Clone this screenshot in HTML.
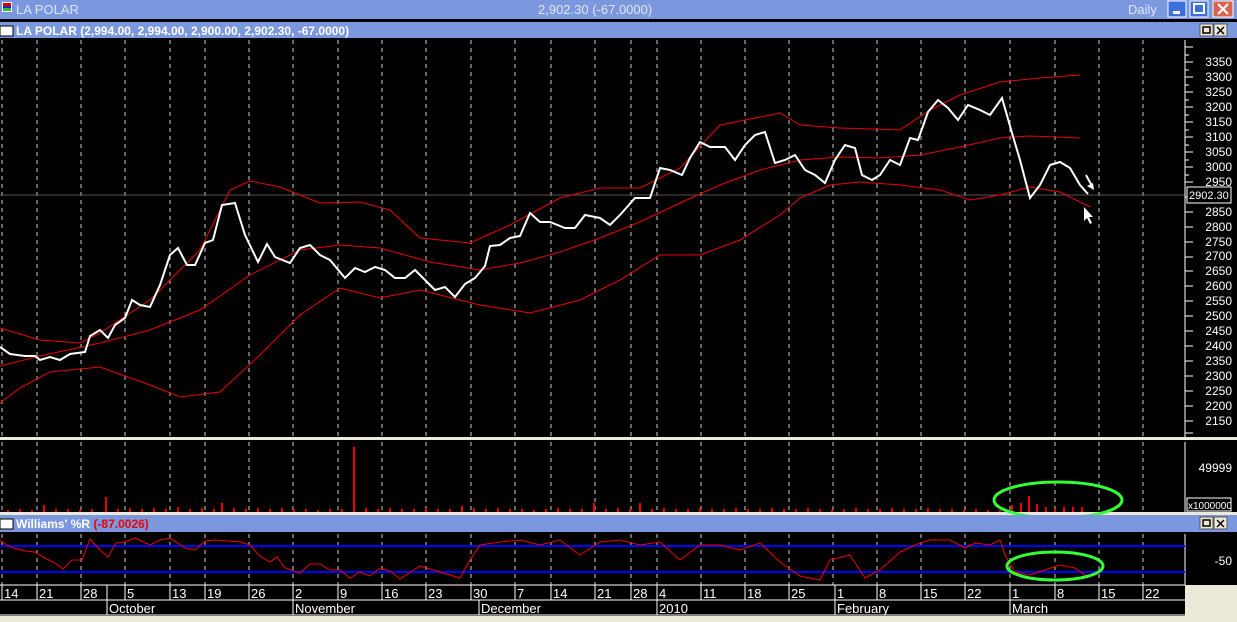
<!DOCTYPE html>
<html><head><meta charset="utf-8"><style>
body{margin:0;width:1237px;height:622px;overflow:hidden;background:#ece9d8;font-family:"Liberation Sans",sans-serif}
svg{display:block}
text{font-family:"Liberation Sans",sans-serif}
</style></head><body>
<svg width="1237" height="622" xmlns="http://www.w3.org/2000/svg">
<rect width="1237" height="622" fill="#000"/>
<rect x="0" y="0" width="1237" height="19" fill="#7b97dd"/>
<rect x="2" y="2" width="10" height="10" fill="#fff"/><rect x="3" y="3" width="8" height="3" fill="#d00"/><rect x="3" y="6" width="8" height="2" fill="#22c"/><rect x="3" y="8" width="8" height="3" fill="#3b3"/>
<text x="16" y="14" fill="#dfe6f7" font-size="13">LA POLAR</text>
<text x="538" y="14" fill="#dfe6f7" font-size="13">2,902.30 (-67.0000)</text>
<text x="1128" y="14" fill="#dfe6f7" font-size="13">Daily</text>
<rect x="1168" y="1" width="18" height="16" fill="#3e6fdc" stroke="#fff" stroke-width="1"/><rect x="1173" y="11" width="7" height="3" fill="#fff"/>
<rect x="1190" y="1" width="18" height="16" fill="#3e6fdc" stroke="#fff"/><rect x="1194" y="4" width="10" height="9" fill="none" stroke="#fff" stroke-width="2"/>
<rect x="1213" y="1" width="20" height="16" fill="#d9634c" stroke="#fff"/><path d="M1218 4l10 10M1228 4l-10 10" stroke="#fff" stroke-width="2"/>
<rect x="0" y="22" width="1237" height="16" fill="#7b97dd"/>
<rect x="0" y="26" width="13" height="10" fill="#fff" stroke="#000"/>
<text x="16" y="35" fill="#fff" font-size="12" font-weight="bold">LA POLAR <tspan>(2,994.00, 2,994.00, 2,900.00, 2,902.30, -67.0000)</tspan></text>
<rect x="1200" y="24" width="13" height="12" fill="#ece9d8" stroke="#555"/><rect x="1203" y="27" width="7" height="6" fill="none" stroke="#000" stroke-width="1.5"/>
<rect x="1214" y="24" width="13" height="12" fill="#ece9d8" stroke="#555"/><path d="M1217 27l7 7M1224 27l-7 7" stroke="#000" stroke-width="1.5"/>
<g stroke="#ccc" stroke-width="1" stroke-dasharray="4,4">
<path d="M2 40V437M37 40V437M81 40V437M125 40V437M170 40V437M205 40V437M249 40V437M293 40V437M338 40V437M382 40V437M426 40V437M471 40V437M515 40V437M551 40V437M595 40V437M631 40V437M657 40V437M701 40V437M745 40V437M789 40V437M833 40V437M877 40V437M921 40V437M965 40V437M1010 40V437M1055 40V437M1099 40V437M1143 40V437"/>
<path d="M2 442V512M37 442V512M81 442V512M125 442V512M170 442V512M205 442V512M249 442V512M293 442V512M338 442V512M382 442V512M426 442V512M471 442V512M515 442V512M551 442V512M595 442V512M631 442V512M657 442V512M701 442V512M745 442V512M789 442V512M833 442V512M877 442V512M921 442V512M965 442V512M1010 442V512M1055 442V512M1099 442V512M1143 442V512"/>
<path d="M2 534V585M37 534V585M81 534V585M125 534V585M170 534V585M205 534V585M249 534V585M293 534V585M338 534V585M382 534V585M426 534V585M471 534V585M515 534V585M551 534V585M595 534V585M631 534V585M657 534V585M701 534V585M745 534V585M789 534V585M833 534V585M877 534V585M921 534V585M965 534V585M1010 534V585M1055 534V585M1099 534V585M1143 534V585"/>
</g>
<line x1="0" y1="195" x2="1185" y2="195" stroke="#555"/>
<g fill="none" stroke="#e00" stroke-width="1">
<polyline points="0,366 40,356 100,343 150,330 200,310 250,275 300,250 340,245 380,248 430,262 480,270 520,263 560,252 600,238 640,222 680,203 720,185 760,170 800,160 840,157 880,158 920,155 960,147 1000,138 1030,136 1080,138"/>
<polyline points="0,328 40,340 80,343 100,333 150,300 200,250 230,190 250,181 280,187 320,203 360,202 390,210 420,238 470,243 510,225 560,198 600,188 640,188 680,168 720,125 760,117 780,113 800,125 840,128 900,130 930,110 960,95 1000,82 1040,78 1080,75"/>
<polyline points="0,403 20,388 50,372 100,367 150,385 180,397 220,392 260,355 300,315 340,288 380,298 420,290 480,305 530,313 580,300 620,280 660,255 700,255 740,240 780,215 800,198 830,185 860,182 900,185 940,190 970,200 1000,195 1030,187 1060,192 1090,207"/>
</g>
<polyline fill="none" stroke="#fff" stroke-width="2" points="0,347 10,354 25,356 35,356 40,360 50,357 60,360 70,354 85,352 90,336 100,330 108,338 115,325 125,318 132,300 140,305 150,307 160,285 170,255 178,248 187,265 195,265 205,243 213,240 222,205 235,203 245,235 258,262 267,244 275,257 290,263 300,248 310,245 320,255 330,260 345,278 355,268 365,272 375,267 385,270 395,278 405,278 415,270 425,280 435,290 445,287 455,297 465,284 475,278 485,266 490,246 500,245 510,238 520,236 530,213 540,222 550,222 565,228 575,228 585,215 600,218 610,225 620,215 635,198 650,198 660,168 670,170 682,175 690,158 700,142 710,147 725,147 735,160 745,145 755,135 765,132 775,163 785,160 795,155 805,170 815,175 825,183 835,160 845,145 855,148 862,175 872,180 880,175 890,160 900,165 910,138 918,140 928,112 938,100 948,108 958,120 968,105 980,110 990,115 1002,98 1012,133 1020,160 1030,198 1040,185 1050,165 1060,162 1070,168 1080,185 1088,194"/>
<line x1="1086" y1="175" x2="1092" y2="186" stroke="#fff" stroke-width="2"/><path d="M1094 190l-7-4 6-3z" fill="#fff"/>
<path d="M1084 207v14l3-3 3 6 2-1-3-6h4z" fill="#fff"/>
<g stroke="#fff"><line x1="1185" y1="40" x2="1185" y2="437"/><line x1="1185" y1="442" x2="1185" y2="512"/><line x1="1185" y1="534" x2="1185" y2="585"/></g>
<g stroke="#fff"><path d="M1185 47h8M1185 55h4M1185 62h8M1185 70h4M1185 77h8M1185 85h4M1185 92h8M1185 100h4M1185 107h8M1185 115h4M1185 122h8M1185 130h4M1185 137h8M1185 145h4M1185 152h8M1185 160h4M1185 167h8M1185 175h4M1185 182h8M1185 197h8M1185 212h8M1185 227h8M1185 242h8M1185 257h8M1185 271h8M1185 286h8M1185 301h8M1185 316h8M1185 331h8M1185 346h8M1185 361h8M1185 376h8M1185 391h8M1185 406h8M1185 421h8M1185 433h8"/></g>
<g fill="#fff" font-size="12" text-anchor="end">
<text x="1232" y="66">3350</text><text x="1232" y="81">3300</text><text x="1232" y="96">3250</text><text x="1232" y="111">3200</text><text x="1232" y="126">3150</text><text x="1232" y="141">3100</text><text x="1232" y="156">3050</text><text x="1232" y="171">3000</text><text x="1232" y="186">2950</text><text x="1232" y="216">2850</text><text x="1232" y="231">2800</text><text x="1232" y="246">2750</text><text x="1232" y="260">2700</text><text x="1232" y="275">2650</text><text x="1232" y="290">2600</text><text x="1232" y="305">2550</text><text x="1232" y="320">2500</text><text x="1232" y="335">2450</text><text x="1232" y="350">2400</text><text x="1232" y="365">2350</text><text x="1232" y="380">2300</text><text x="1232" y="395">2250</text><text x="1232" y="410">2200</text><text x="1232" y="425">2150</text>
<text x="1232" y="472">49999</text><text x="1232" y="565">-50</text>
</g>
<rect x="1187" y="187" width="44" height="16" fill="#000" stroke="#fff"/><text x="1189" y="199" fill="#fff" font-size="11">2902.30</text>
<rect x="1187" y="498" width="44" height="13" fill="#000" stroke="#fff"/><text x="1188" y="509" fill="#fff" font-size="10">x1000000</text>
<rect x="0" y="437" width="1237" height="3" fill="#ece9d8"/>
<rect x="0" y="512" width="1237" height="3" fill="#ece9d8"/>
<g stroke="#e00" stroke-width="2">
<path d="M8 510v2M20 509v3M32 510v2M44 505v7M56 509v3M68 509v3M80 510v2M92 509v3M106 497v15M118 509v3M130 508v4M142 509v3M154 508v4M166 509v3M178 507v5M190 509v3M202 508v4M214 509v3M222 503v9M234 508v4M246 509v3M258 508v4M270 509v3M282 508v4M294 509v3M306 509v3M318 510v2M330 509v3M342 509v3M354 447v65M366 508v4M378 509v3M390 508v4M402 509v3M414 509v3M426 508v4M438 509v3M450 509v3M462 506v6M474 508v4M486 509v3M498 508v4M510 509v3M522 509v3M534 510v2M546 509v3M558 508v4M570 509v3M582 509v3M594 503v9M606 509v3M618 508v4M630 509v3M640 503v9M652 509v3M664 508v4M676 509v3M688 509v3M700 508v4M712 509v3M724 509v3M736 508v4M748 509v3M760 509v3M772 508v4M784 509v3M796 509v3M808 508v4M820 509v3M832 510v2M844 509v3M856 508v4M868 509v3M880 509v3M892 508v4M904 509v3M916 509v3M928 508v4M940 509v3M952 509v3M964 510v2M976 509v3M988 510v2M1000 510v2M1012 505v7M1021 503v9M1029 496v16M1037 504v8M1046 507v5M1055 509v3M1064 507v5M1073 507v5M1082 507v5"/>
</g>
<ellipse cx="1058" cy="500" rx="64" ry="18" fill="none" stroke="#3f3" stroke-width="3"/>
<rect x="0" y="515" width="1237" height="17" fill="#7b97dd"/>
<rect x="0" y="519" width="13" height="10" fill="#fff" stroke="#000"/>
<text x="16" y="528" fill="#fff" font-size="12" font-weight="bold">Williams' %R <tspan fill="#e00">(-87.0026)</tspan></text>
<rect x="1200" y="517" width="13" height="12" fill="#ece9d8" stroke="#555"/><rect x="1203" y="520" width="7" height="6" fill="none" stroke="#000" stroke-width="1.5"/>
<rect x="1214" y="517" width="13" height="12" fill="#ece9d8" stroke="#555"/><path d="M1217 520l7 7M1224 520l-7 7" stroke="#000" stroke-width="1.5"/>
<g stroke="#00f" stroke-width="2"><line x1="0" y1="546" x2="1185" y2="546"/><line x1="0" y1="572" x2="1185" y2="572"/></g>
<polyline fill="none" stroke="#e00" stroke-width="1" points="0,540 10,547 25,551 35,552 45,558 55,563 63,569 72,560 82,560 90,539 100,550 108,557 116,543 125,542 135,538 150,545 160,540 170,538 185,548 195,550 205,541 215,540 240,542 250,545 260,556 270,562 277,557 285,568 300,573 310,564 320,564 330,570 340,570 350,578 360,572 370,576 380,568 390,571 400,579 420,566 440,572 460,578 470,560 480,545 500,542 520,540 540,545 560,540 580,555 600,542 620,540 640,545 660,542 680,560 700,545 720,545 740,550 760,543 780,562 800,576 820,580 830,560 850,555 865,578 880,570 900,552 915,545 930,540 950,540 965,548 975,543 990,545 1000,540 1005,555 1015,572 1030,575 1045,570 1060,565 1075,568 1085,575"/>
<ellipse cx="1055" cy="566" rx="48" ry="14" fill="none" stroke="#3f3" stroke-width="3"/>
<line x1="0" y1="585" x2="1185" y2="585" stroke="#fff"/>
<line x1="0" y1="600" x2="1185" y2="600" stroke="#fff"/>
<line x1="0" y1="615" x2="1237" y2="615" stroke="#fff"/>
<rect x="1185" y="585" width="52" height="37" fill="#ece9d8"/>
<rect x="0" y="616" width="1237" height="6" fill="#ece9d8"/>
<g stroke="#fff"><path d="M2 585v15M37 585v15M81 585v15M107 585v30M125 585v15M170 585v15M205 585v15M249 585v15M293 585v30M338 585v15M382 585v15M426 585v15M471 585v15M479 600v15M515 585v15M551 585v15M595 585v15M631 585v15M657 585v30M701 585v15M745 585v15M789 585v15M835 585v30M877 585v15M921 585v15M965 585v15M1010 585v30M1055 585v15M1099 585v15M1143 585v15"/></g>
<g fill="#fff" font-size="13">
<text x="4" y="598">14</text><text x="39" y="598">21</text><text x="83" y="598">28</text><text x="127" y="598">5</text><text x="172" y="598">13</text><text x="207" y="598">19</text><text x="251" y="598">26</text><text x="295" y="598">2</text><text x="340" y="598">9</text><text x="384" y="598">16</text><text x="428" y="598">23</text><text x="473" y="598">30</text><text x="517" y="598">7</text><text x="553" y="598">14</text><text x="597" y="598">21</text><text x="633" y="598">28</text><text x="659" y="598">4</text><text x="703" y="598">11</text><text x="747" y="598">18</text><text x="791" y="598">25</text><text x="837" y="598">1</text><text x="879" y="598">8</text><text x="923" y="598">15</text><text x="967" y="598">22</text><text x="1012" y="598">1</text><text x="1057" y="598">8</text><text x="1101" y="598">15</text><text x="1145" y="598">22</text>
<text x="109" y="613">October</text><text x="295" y="613">November</text><text x="481" y="613">December</text><text x="659" y="613">2010</text><text x="837" y="613">February</text><text x="1012" y="613">March</text>
</g>
</svg>
</body></html>
